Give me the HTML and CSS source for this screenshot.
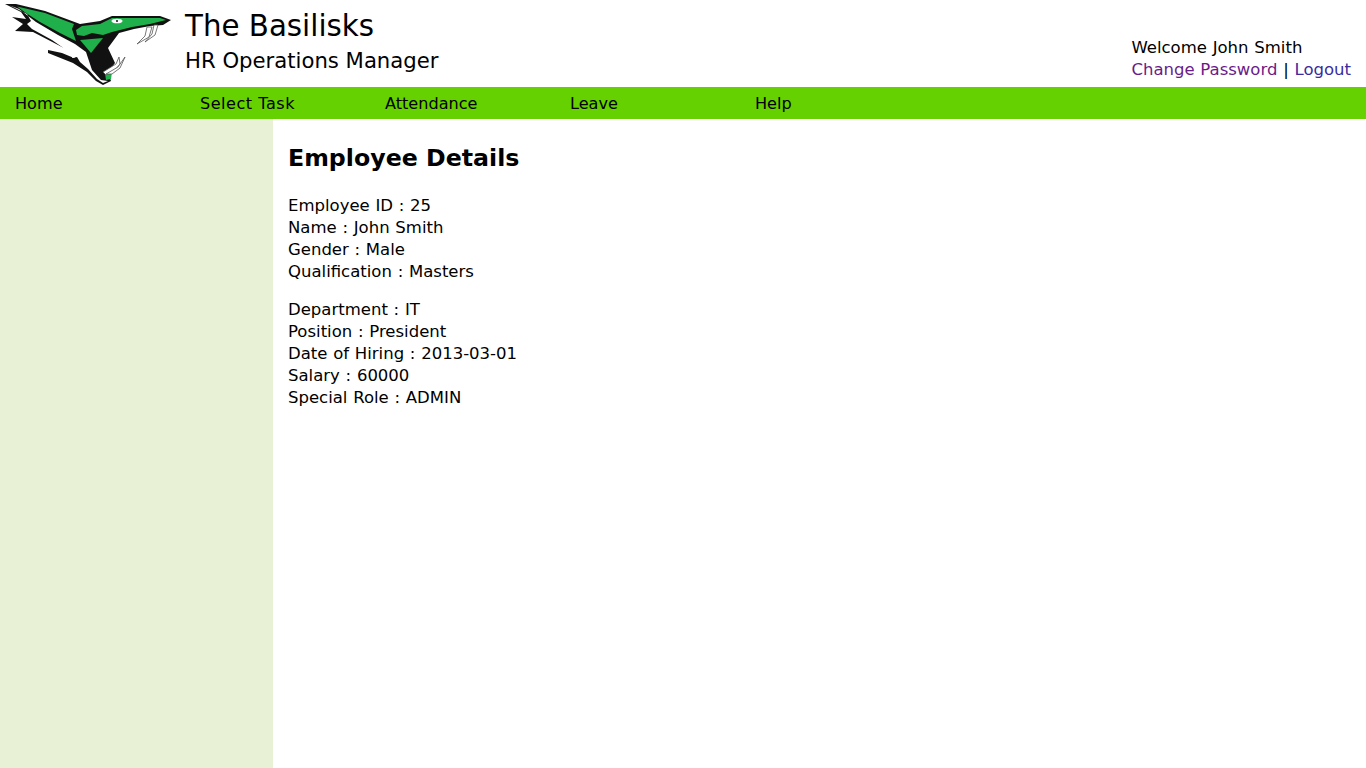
FILE: index.html
```html
<!DOCTYPE html>
<html lang="en">
<head>
<meta charset="utf-8">
<title>Employee Details</title>
<link rel="stylesheet" href="styles.css">
</head>
<body>
<header class="header">
  <svg class="logo" width="185" height="87" viewBox="0 0 185 87" aria-label="Basilisks logo">
    <path class="ink" d="M5 4 L16 4 L45 11 L80 24 L100 21 L112 16 L160 16 L171 20 L163 25 L150 26 L134 29 L119 33 L108 48 L115 63 L108 72 L111 81 L103 85 L96 81 L87 72 L73 63 L48 53 L48 50 L62 53 L74 58 L77 55 L60 46 L33 32 L15 31 L23 24 L12 17 L26 19 L21 12 Z"/>
    <path class="white" d="M10 5.500 L19 9 L36 22 L58 35 L75 44 L86 52 L92 70 L101 80 L108 81 L103 83 L97 79 L88 69 L80 62 L77 57 L72 58 L73 53 L67 53 L62 47 L52 40 L32 29 L27 24 L31 21 L27 14 Z"/>
    <path class="green" d="M17 6.500 L45 13 L74 24 L72 29 L76 41 L60 33 L40 22 L26 13 Z"/>
    <path class="green" d="M76 30 L82 26 L100 24 L112 18 L160 18 L166 20 L150 24 L132 27 L120 30 L112 32 L103 35 L92 33 L84 36 L77 35 Z"/>
    <path class="green" d="M80 40 L103 38 L91 53 Z"/>
    <path class="green" d="M105 73 L112 72 L111 79 L106 80 Z"/>
    <ellipse class="white" cx="117" cy="21" rx="5.500" ry="2.300"/>
    <circle class="ink" cx="117" cy="21" r="1"/>
    <path class="fang" d="M147 27 L152 27 L149 37 L137 44 L145 36 Z"/>
    <path class="fang" d="M154 25 L158 25 L155 35 L145 42 L152 34 Z"/>
    <path class="fang" d="M119 57 L116 64 L103 72 L106 75 L115 70 L120 64 Z"/>
    <path class="fang" d="M125 57 L118 67 L106 74 L112 74 L120 68 Z"/>
  </svg>
  <div class="brand">
    <div class="brand-title">The Basilisks</div>
    <div class="brand-sub">HR Operations Manager</div>
  </div>
  <div class="account">
    <div>Welcome John Smith</div>
    <div><a class="visited" href="#">Change Password</a> | <a href="#">Logout</a></div>
  </div>
</header>
<nav class="nav">
  <a class="nav-item" href="#">Home</a>
  <a class="nav-item nav-item-wide" href="#">Select Task</a>
  <a class="nav-item" href="#">Attendance</a>
  <a class="nav-item" href="#">Leave</a>
  <a class="nav-item" href="#">Help</a>
</nav>
<div class="layout">
  <aside class="sidebar"></aside>
  <main class="content">
    <h1 class="title">Employee Details</h1>
    <p class="block">Employee ID : 25<br>Name : John Smith<br>Gender : Male<br>Qualification : Masters</p>
    <p class="block">Department : IT<br>Position : President<br>Date of Hiring : 2013-03-01<br>Salary : 60000<br>Special Role : ADMIN</p>
  </main>
</div>
</body>
</html>
```
FILE: styles.css
```css
* { box-sizing: border-box; }
html, body { height: 100%; }
body {
  margin: 0;
  display: flex;
  flex-direction: column;
  height: 768px;
  overflow: hidden;
  font-family: "DejaVu Sans", Verdana, sans-serif;
  font-size: 16.5px;
  word-spacing: 0.5px;
  line-height: 22px;
  color: #000;
  background: #fff;
}
.header { display: flex; height: 87px; flex: none; }
.logo { flex: none; width: 185px; }
.ink { fill: #111; }
.white { fill: #fff; }
.green { fill: #1fb04b; }
.fang { fill: #fff; stroke: #555; stroke-width: 0.8; }
.brand { display: flex; flex-direction: column; flex: 1; padding-top: 8px; }
.brand-title { font-size: 29.3px; line-height: 36px; word-spacing: 0; }
.brand-sub { font-size: 21.2px; line-height: 33px; word-spacing: 0; }
.account { padding: 37px 15px 0 0; }
.account a { color: #3b2aa0; text-decoration: none; }
.account a.visited { color: #6a1b8a; }
.nav { display: flex; flex: none; height: 32px; background: #66d100; padding: 1px 0 0 15px; font-size: 16.1px; word-spacing: 0; }
.nav-item { width: 185px; line-height: 31px; color: #000; text-decoration: none; }
.nav-item-wide { letter-spacing: 0.5px; }
.layout { display: flex; flex: 1; }
.sidebar { width: 273px; background: #e8f1d6; }
.content { flex: 1; padding: 24px 15px; }
.title { margin: 0 0 22px; font-size: 23.7px; line-height: 30px; font-weight: bold; word-spacing: 0; }
.block { margin: 0 0 16px; }
```
